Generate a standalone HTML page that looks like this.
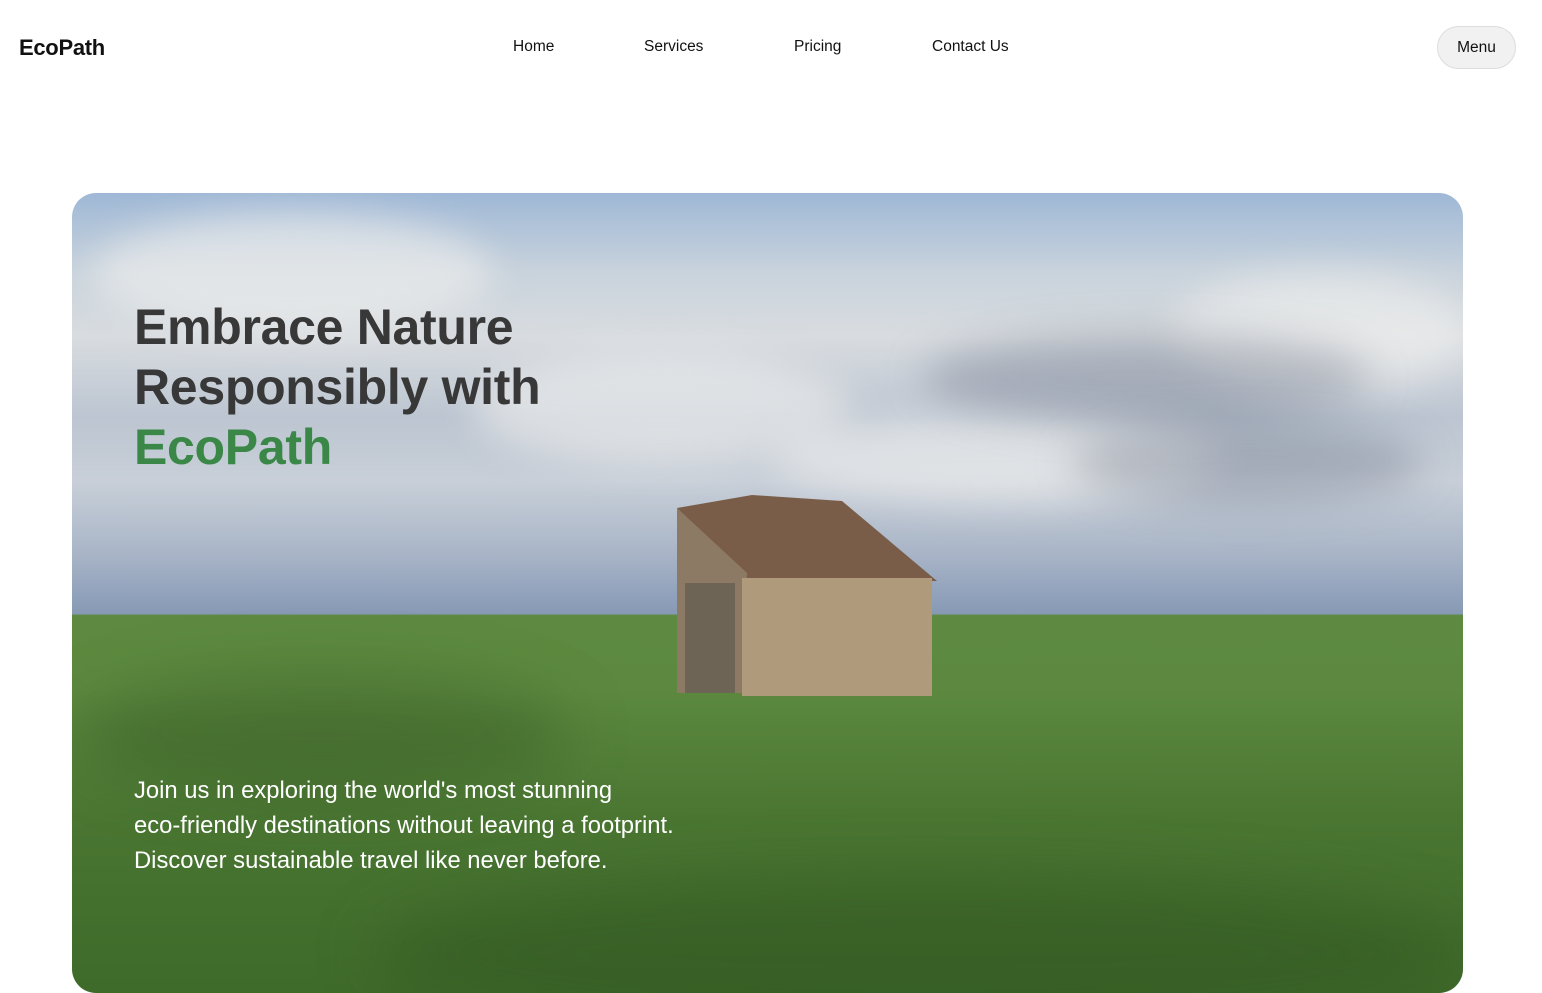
<!DOCTYPE html>
<html><head><meta charset="utf-8"><style>
*{margin:0;padding:0;box-sizing:border-box}
body{width:1542px;height:952px;overflow:hidden;background:#fff;font-family:"Liberation Sans",sans-serif;color:#111}
.logo{position:absolute;left:19px;top:35px;font-size:22px;font-weight:700;letter-spacing:-0.3px}
.nav a{position:absolute;top:38px;font-size:15.5px;color:#111;text-decoration:none}
.menu{position:absolute;left:1437px;top:26px;width:79px;height:43px;border-radius:22px;background:#f1f1f1;border:1px solid #ddd;font-size:15.5px;display:flex;align-items:center;justify-content:center}
.hero{position:absolute;left:72px;top:193px;width:1391px;height:800px;border-radius:24px;overflow:hidden;
background:linear-gradient(180deg,#9fb8d6 0%,#c9d3dc 10%,#d8dce0 18%,#bcc5d1 28%,#c8cfd8 36%,#a9b5c7 45%,#8e9fba 51%,#8799b3 52.6%,#5d8a40 52.8%,#5c893f 62%,#4a7632 78%,#3e6a2a 100%)}
.cloud{position:absolute;border-radius:50%;background:rgba(240,240,238,.6);filter:blur(18px)}
.dark{position:absolute;border-radius:50%;background:rgba(100,110,130,.35);filter:blur(20px)}
.shade{position:absolute;border-radius:50%;background:rgba(40,70,25,.3);filter:blur(30px)}
h1{position:absolute;left:62px;top:104px;font-size:50px;line-height:60px;font-weight:700;color:#383838;letter-spacing:-0.3px}
h1 span{color:#3b8748}
p{position:absolute;left:62px;top:580px;font-size:23.8px;line-height:35px;color:#fff}
</style></head><body>
<div class="logo">EcoPath</div>
<div class="nav"><a style="left:513px">Home</a><a style="left:644px">Services</a><a style="left:794px">Pricing</a><a style="left:932px">Contact Us</a></div>
<div class="menu">Menu</div>
<div class="hero">
<div class="cloud" style="left:20px;top:20px;width:400px;height:120px"></div>
<div class="cloud" style="left:400px;top:160px;width:380px;height:110px"></div>
<div class="cloud" style="left:700px;top:220px;width:450px;height:90px"></div>
<div class="cloud" style="left:1100px;top:80px;width:300px;height:120px"></div>
<div class="dark" style="left:850px;top:140px;width:450px;height:90px"></div>
<div class="dark" style="left:1000px;top:230px;width:350px;height:80px"></div>
<div class="shade" style="left:0px;top:480px;width:500px;height:120px"></div>
<div class="shade" style="left:300px;top:680px;width:1100px;height:160px"></div>
<svg style="position:absolute;left:585px;top:300px" width="290" height="210">
<polygon points="20,15 95,2 185,8 280,88 95,90" fill="#7a5d48"/>
<polygon points="20,15 90,80 85,200 20,200" fill="#8c7a64"/>
<rect x="85" y="85" width="190" height="118" fill="#b09a7c"/>
<rect x="28" y="90" width="50" height="110" fill="#6e6456"/>
</svg>
<h1>Embrace Nature<br>Responsibly with<br><span>EcoPath</span></h1>
<p>Join us in exploring the world's most stunning<br>eco-friendly destinations without leaving a footprint.<br>Discover sustainable travel like never before.</p>
</div>
</body></html>
